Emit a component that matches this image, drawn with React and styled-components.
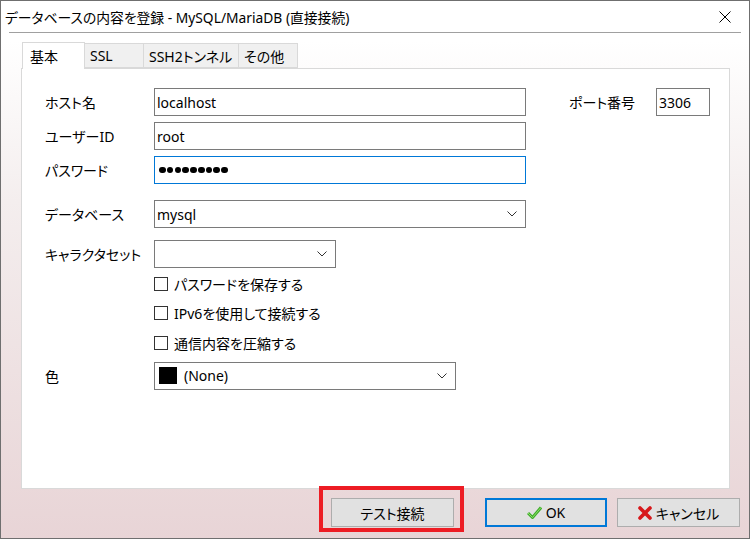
import React from "react";
import styled, { createGlobalStyle } from "styled-components";

const GlobalStyle = createGlobalStyle`
  html, body {
    margin: 0;
    padding: 0;
    background: #ffffff;
  }
  body {
    font-family: "Noto Sans", "Noto Sans CJK JP", sans-serif;
    font-feature-settings: "palt";
  }
`;

const Window = styled.div`
  width: 750px;
  height: 539px;
  box-sizing: border-box;
  border: 1px solid #6f6f6f;
  display: flex;
  flex-direction: column;
  background: linear-gradient(180deg, #ffffff 0px, #ffffff 40px, #f4eeee 200px, #e8d4d6 539px);
  overflow: hidden;
`;

const TitleBar = styled.div`
  height: 31px;
  display: flex;
  align-items: center;
  justify-content: space-between;
  padding: 0 18px 0 4px;
  background: #ffffff;
`;

const Title = styled.span`
  font-size: 13.8px;
  color: #000;
`;

const Separator = styled.div`
  height: 1px;
  margin: 0 8px;
  background: #a0a0a0;
`;

const Body = styled.div`
  flex: 1;
  display: flex;
  flex-direction: column;
  padding: 8px 19px 0 20px;
`;

const TabStrip = styled.div`
  display: flex;
  align-items: flex-end;
  height: 27px;
  padding-left: 1px;
`;

const Tab = styled.div`
  box-sizing: border-box;
  height: ${(p) => (p.$active ? "27px" : "25px")};
  width: ${(p) => p.$w}px;
  padding-left: ${(p) => (p.$active ? 7 : 5)}px;
  display: flex;
  align-items: center;
  font-size: 14px;
  color: #000;
  background: ${(p) => (p.$active ? "#ffffff" : "#f0f0f0")};
  border: 1px solid #d9d9d9;
  border-bottom: ${(p) => (p.$active ? "none" : "1px solid #d9d9d9")};
  margin-left: ${(p) => (p.$first ? 0 : -1)}px;
  position: relative;
  z-index: ${(p) => (p.$active ? 2 : 1)};
  margin-bottom: ${(p) => (p.$active ? "-1px" : "0")};
`;

const Panel = styled.div`
  box-sizing: border-box;
  height: 421px;
  background: #ffffff;
  border: 1px solid #d9d9d9;
  padding: 19px 0 0 23px;
  display: flex;
  flex-direction: column;
`;

const Row = styled.div`
  display: flex;
  align-items: center;
  margin-top: ${(p) => p.$mt || 0}px;
  min-height: ${(p) => p.$h || 28}px;
`;

const Label = styled.div`
  width: 109px;
  flex-shrink: 0;
  font-size: 14px;
  color: #000;
`;

const Input = styled.div`
  box-sizing: border-box;
  width: ${(p) => p.$w}px;
  height: 28px;
  border: 1px solid ${(p) => (p.$focus ? "#0078d7" : "#7a7a7a")};
  background: #fff;
  display: flex;
  align-items: center;
  padding-left: 2px;
  font-size: 14px;
  color: #000;
`;

const PortLabel = styled.div`
  margin-left: 43px;
  width: 87px;
  font-size: 14px;
  color: #000;
`;

const Select = styled(Input)`
  justify-content: space-between;
  padding-right: 8px;
`;

const Dots = styled.div`
  display: flex;
  gap: 1.2px;
  padding-left: 2px;
`;

const Dot = styled.span`
  width: 6.6px;
  height: 6.6px;
  border-radius: 50%;
  background: #000;
`;

const CheckList = styled.div`
  display: flex;
  flex-direction: column;
  padding-top: 1px;
`;

const CheckRow = styled.label`
  display: flex;
  align-items: center;
  height: 29.5px;
  margin-left: 109px;
  font-size: 14px;
  color: #000;
  gap: 6px;
`;

const Box = styled.span`
  box-sizing: border-box;
  width: 14px;
  height: 14px;
  border: 1px solid #333;
  background: #fff;
`;

const Swatch = styled.span`
  width: 18px;
  height: 17px;
  background: #000;
  margin-left: 2px;
  margin-right: 7px;
`;

const SwatchValue = styled.span`
  display: flex;
  align-items: center;
`;

const ButtonRow = styled.div`
  display: flex;
  align-items: center;
  justify-content: flex-end;
  padding-top: 9px;
  margin-right: -10px;
`;

const Button = styled.div`
  box-sizing: border-box;
  position: relative;
  width: ${(p) => p.$w || 123}px;
  height: 29px;
  margin-left: ${(p) => p.$ml || 0}px;
  background: #e1e1e1;
  border: ${(p) => (p.$primary ? "2px solid #0078d7" : "1px solid #adadad")};
  display: flex;
  align-items: center;
  justify-content: center;
  gap: 4px;
  font-size: 14px;
  color: #000;
`;

const Highlight = styled.div`
  position: absolute;
  left: -13px;
  top: -13px;
  right: -11px;
  bottom: -6px;
  border: 4px solid #ed1c24;
  pointer-events: none;
`;

const Chevron = () => (
  <svg width="10" height="6" viewBox="0 0 10 6">
    <path d="M0.5 0.5 L5 5 L9.5 0.5" fill="none" stroke="#333" strokeWidth="1" />
  </svg>
);

const CloseIcon = () => (
  <svg width="12" height="12" viewBox="0 0 12 12">
    <path d="M0.5 0.5 L11.5 11.5 M11.5 0.5 L0.5 11.5" stroke="#000" strokeWidth="1" />
  </svg>
);

const CheckIcon = () => (
  <svg width="15" height="13" viewBox="0 0 15 13">
    <path d="M1 7 L5.5 11.5 L14 1.5" fill="none" stroke="#3fae2a" strokeWidth="3" strokeLinejoin="round" />
    <path d="M1 7 L5.5 11.5 L14 1.5" fill="none" stroke="#8fdc6a" strokeWidth="1" />
  </svg>
);

const CrossIcon = () => (
  <svg width="14" height="14" viewBox="0 0 14 14">
    <path d="M2 2 L12 12 M12 2 L2 12" stroke="#d7191c" strokeWidth="3.6" strokeLinecap="round" />
  </svg>
);

const tabs = [
  { label: "基本", w: 63, active: true },
  { label: "SSL", w: 60 },
  { label: "SSH2トンネル", w: 96 },
  { label: "その他", w: 60 },
];

const checks = ["パスワードを保存する", "IPv6を使用して接続する", "通信内容を圧縮する"];

export default function App() {
  return (
    <>
      <GlobalStyle />
      <Window>
        <TitleBar>
          <Title>データベースの内容を登録 - MySQL/MariaDB (直接接続)</Title>
          <CloseIcon />
        </TitleBar>
        <Separator />
        <Body>
          <TabStrip>
            {tabs.map((t, i) => (
              <Tab key={t.label} $w={t.w} $active={t.active} $first={i === 0}>
                {t.label}
              </Tab>
            ))}
          </TabStrip>
          <Panel>
            <Row>
              <Label>ホスト名</Label>
              <Input $w={372}>localhost</Input>
              <PortLabel>ポート番号</PortLabel>
              <Input $w={54}>3306</Input>
            </Row>
            <Row $mt={6}>
              <Label>ユーザーID</Label>
              <Input $w={372}>root</Input>
            </Row>
            <Row $mt={6}>
              <Label>パスワード</Label>
              <Input $w={372} $focus>
                <Dots>
                  {Array.from({ length: 9 }).map((_, i) => (
                    <Dot key={i} />
                  ))}
                </Dots>
              </Input>
            </Row>
            <Row $mt={16}>
              <Label>データベース</Label>
              <Select $w={372}>
                mysql
                <Chevron />
              </Select>
            </Row>
            <Row $mt={12}>
              <Label>キャラクタセット</Label>
              <Select $w={182}>
                <span />
                <Chevron />
              </Select>
            </Row>
            <CheckList>
              {checks.map((c) => (
                <CheckRow key={c}>
                  <Box />
                  {c}
                </CheckRow>
              ))}
            </CheckList>
            <Row $mt={4}>
              <Label>色</Label>
              <Select $w={302}>
                <SwatchValue>
                  <Swatch />
                  (None)
                </SwatchValue>
                <Chevron />
              </Select>
            </Row>
          </Panel>
          <ButtonRow>
            <Button $w={123}>
              テスト接続
              <Highlight />
            </Button>
            <Button $w={122} $ml={31} $primary>
              <CheckIcon />
              OK
            </Button>
            <Button $w={123} $ml={10}>
              <CrossIcon />
              キャンセル
            </Button>
          </ButtonRow>
        </Body>
      </Window>
    </>
  );
}
